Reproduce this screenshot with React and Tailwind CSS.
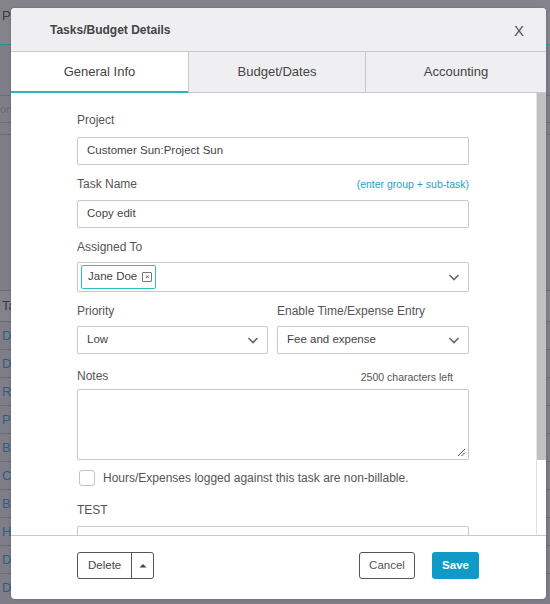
import { useState } from 'react';

const rowLetters = ['D', 'D', 'R', 'P', 'B', 'C', 'B', 'H', 'D', 'D'];

function Chevron() {
  return (
    <svg width="14" height="14" viewBox="0 0 14 14" className="text-[#666]">
      <path d="M2.5 5 L7 9.5 L11.5 5" fill="none" stroke="currentColor" strokeWidth="1.6" />
    </svg>
  );
}

function Label({ children, right }) {
  return (
    <div className="flex items-end justify-between h-[16px] leading-[16px]">
      <span className="text-[12px] text-[#555]">{children}</span>
      {right}
    </div>
  );
}

function Select({ value }) {
  return (
    <div className="h-[28px] border border-[#c8c8c8] rounded-[2px] flex items-center justify-between pl-[9px] pr-[7px] text-[11.5px] text-[#444]">
      <span>{value}</span>
      <Chevron />
    </div>
  );
}

export default function App() {
  const [tab, setTab] = useState(0);
  const [nonBillable, setNonBillable] = useState(false);
  const tabs = ['General Info', 'Budget/Dates', 'Accounting'];

  return (
    <div className="relative w-[550px] h-[604px] overflow-hidden bg-[#7f7e88] font-['Liberation_Sans',Arial,sans-serif]">
      {/* Dimmed page behind */}
      <div className="h-[44px] bg-[#84838c] pl-[2px] pt-[6px] text-[13px] text-[#3a3a44]">Pr</div>
      <div className="h-px bg-[#2b8f94]" />
      <div className="h-[50px]" />
      <div className="h-px bg-[#6c6b74]" />
      <div className="h-[26px] text-[11px] leading-[26px] text-[#6a6973]">on</div>
      <div className="h-px bg-[#6c6b74]" />
      <div className="h-[11px]" />
      <div className="h-px bg-[#6c6b74]" />
      <div className="h-[155px]" />
      <div className="h-px bg-[#6c6b74]" />
      <div className="h-[30px] bg-[#84838c] pl-[2px] text-[13px] leading-[30px] text-[#3a3a44]">Ta</div>
      {rowLetters.map((l, i) => (
        <div key={i} className="h-[28px] border-t border-[#6c6b74] pl-[2px] text-[13px] leading-[27px] text-[#2d5f86]">
          {l}
        </div>
      ))}

      {/* Modal */}
      <div className="absolute left-[11px] top-[8px] w-[535px] h-[591px] bg-white rounded-[4px] flex flex-col overflow-hidden shadow-[0_0_3px_rgba(0,0,0,0.2)]">
        <div className="h-[44px] shrink-0 bg-[#efeff1] border-b border-[#c9c9cc] flex items-center justify-between pl-[39px] pr-[22px]">
          <span className="text-[12px] font-bold text-[#444]">Tasks/Budget Details</span>
          <span className="text-[15px] text-[#555] mt-[4px]">X</span>
        </div>

        <div className="h-[41px] shrink-0 bg-[#efeff1] flex">
          {tabs.map((t, i) => (
            <button
              key={t}
              onClick={() => setTab(i)}
              className={`${i < 2 ? 'w-[177px]' : 'flex-1'} text-[13px] text-[#444] ${i > 0 ? 'border-l border-[#c9c9cc]' : ''} ${
                tab === i ? 'bg-white border-b-2 border-b-[#2bb5b8]' : 'border-b border-b-[#c9c9cc]'
              }`}
            >
              {t}
            </button>
          ))}
        </div>

        <div className="flex-1 flex min-h-0">
          <div className="flex-1 overflow-hidden pl-[66px] pt-[19px]">
            <div className="w-[392px]">
              <Label>Project</Label>
              <div className="mt-[9px] h-[28px] border border-[#c8c8c8] rounded-[2px] flex items-center pl-[9px] text-[11.5px] text-[#444]">
                Customer Sun:Project Sun
              </div>

              <div className="mt-[11px]">
                <Label right={<span className="text-[10.5px] text-[#1a9fd0]">(enter group + sub-task)</span>}>Task Name</Label>
              </div>
              <div className="mt-[8px] h-[28px] border border-[#c8c8c8] rounded-[2px] flex items-center pl-[9px] text-[11.5px] text-[#444]">
                Copy edit
              </div>

              <div className="mt-[11px]">
                <Label>Assigned To</Label>
              </div>
              <div className="mt-[7px] h-[30px] border border-[#c8c8c8] rounded-[2px] flex items-center justify-between pl-[3px] pr-[7px]">
                <div className="h-[24px] border border-[#2bc0c4] rounded-[2px] flex items-center pl-[6px] pr-[3px] gap-[5px] text-[11.5px] text-[#444]">
                  Jane Doe
                  <span className="w-[10px] h-[10px] border border-[#777] rounded-[1px] flex items-center justify-center text-[8px] leading-none text-[#555]">
                    ×
                  </span>
                </div>
                <Chevron />
              </div>

              <div className="mt-[11px] flex gap-[9px]">
                <div className="w-[191px]">
                  <Label>Priority</Label>
                  <div className="mt-[7px]">
                    <Select value="Low" />
                  </div>
                </div>
                <div className="flex-1">
                  <Label>Enable Time/Expense Entry</Label>
                  <div className="mt-[7px]">
                    <Select value="Fee and expense" />
                  </div>
                </div>
              </div>

              <div className="mt-[14px]">
                <Label right={<span className="text-[10.5px] text-[#555] pr-[16px] leading-[14px]">2500 characters left</span>}>Notes</Label>
              </div>
              <div className="mt-[5px] h-[71px] border border-[#c8c8c8] rounded-[2px] relative">
                <svg width="9" height="9" viewBox="0 0 9 9" className="absolute right-[2px] bottom-[2px]">
                  <path d="M1 8 L8 1 M4.5 8 L8 4.5" stroke="#555" strokeWidth="1" />
                </svg>
              </div>

              <label className="mt-[9px] flex items-center gap-[8px] pl-[2px] cursor-pointer">
                <span
                  onClick={() => setNonBillable(!nonBillable)}
                  className={`w-[16px] h-[16px] border border-[#c4c4c4] rounded-[3px] ${nonBillable ? 'bg-[#1199c8]' : 'bg-white'}`}
                />
                <span className="text-[12px] text-[#555]">Hours/Expenses logged against this task are non-billable.</span>
              </label>

              <div className="mt-[15px]">
                <Label>TEST</Label>
              </div>
              <div className="mt-[8px] h-[28px] border border-[#c8c8c8] rounded-[2px]" />
            </div>
          </div>
          <div className="w-[10px] shrink-0 border-l border-[#e2e2e2] bg-white">
            <div className="h-[367px] bg-[#c1c1c1]" />
          </div>
        </div>

        <div className="h-[64px] shrink-0 border-t border-[#c9c9cc] flex items-start pt-[16px] pl-[66px] pr-[67px]">
          <div className="flex h-[27px] border border-[#555] rounded-[3px]">
            <button className="px-[10px] text-[11.5px] text-[#444]">Delete</button>
            <button className="w-[22px] border-l border-[#555] flex items-center justify-center">
              <svg width="8" height="5" viewBox="0 0 8 5">
                <path d="M0.5 4.5 L4 1 L7.5 4.5 Z" fill="#444" />
              </svg>
            </button>
          </div>
          <div className="flex-1" />
          <button className="h-[27px] w-[56px] border border-[#555] rounded-[3px] text-[11.5px] text-[#555]">Cancel</button>
          <button className="ml-[17px] h-[27px] w-[47px] bg-[#1199c8] rounded-[3px] text-[11.5px] font-bold text-white">Save</button>
        </div>
      </div>
    </div>
  );
}
